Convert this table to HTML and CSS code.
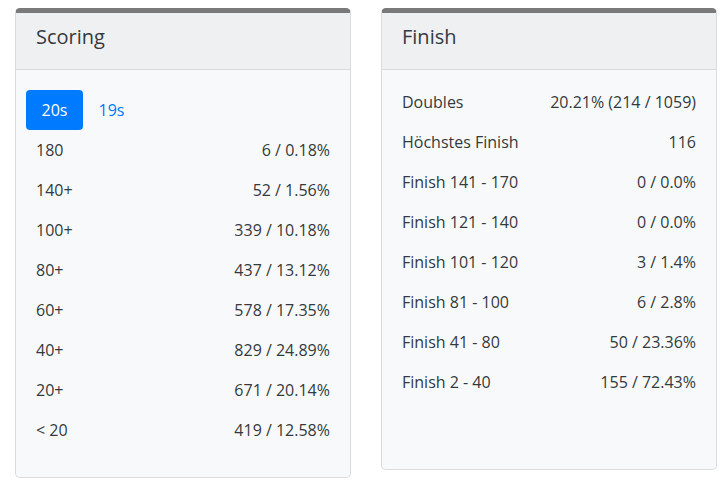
FILE: index.html
```html
<!DOCTYPE html>
<html>
<head>
<meta charset="utf-8">
<link rel="stylesheet" href="styles.css">
</head>
<body>
<div class="cards">
  <div class="card card-scoring">
    <div class="card-header">Scoring</div>
    <div class="card-body body-scoring">
      <div class="pills">
        <span class="pill active">20s</span>
        <span class="pill">19s</span>
      </div>
      <div class="rows">
        <div class="row"><span>180</span><span>6 / 0.18%</span></div>
        <div class="row"><span>140+</span><span>52 / 1.56%</span></div>
        <div class="row"><span>100+</span><span>339 / 10.18%</span></div>
        <div class="row"><span>80+</span><span>437 / 13.12%</span></div>
        <div class="row"><span>60+</span><span>578 / 17.35%</span></div>
        <div class="row"><span>40+</span><span>829 / 24.89%</span></div>
        <div class="row"><span>20+</span><span>671 / 20.14%</span></div>
        <div class="row"><span>&lt; 20</span><span>419 / 12.58%</span></div>
      </div>
    </div>
  </div>
  <div class="card card-finish">
    <div class="card-header">Finish</div>
    <div class="card-body body-finish">
      <div class="rows">
        <div class="row"><span>Doubles</span><span>20.21% (214 / 1059)</span></div>
        <div class="row"><span>Höchstes Finish</span><span>116</span></div>
        <div class="row"><span>Finish 141 - 170</span><span>0 / 0.0%</span></div>
        <div class="row"><span>Finish 121 - 140</span><span>0 / 0.0%</span></div>
        <div class="row"><span>Finish 101 - 120</span><span>3 / 1.4%</span></div>
        <div class="row"><span>Finish 81 - 100</span><span>6 / 2.8%</span></div>
        <div class="row"><span>Finish 41 - 80</span><span>50 / 23.36%</span></div>
        <div class="row"><span>Finish 2 - 40</span><span>155 / 72.43%</span></div>
      </div>
    </div>
  </div>
</div>
</body>
</html>
```
FILE: styles.css
```css
* { box-sizing: border-box; }
body {
  margin: 0;
  background: #fff;
  font-family: "Open Sans", "Noto Sans", sans-serif;
  color: #343a40;
  font-size: 16px;
}
.cards {
  display: flex;
  align-items: flex-start;
  gap: 30px;
  padding: 8px 0 0 15px;
}
.card {
  width: 336px;
  background: #f8f9fa;
  border: 1px solid #dadcde;
  border-top: 5px solid #7a7a7a;
  border-radius: 5px;
  overflow: hidden;
}
.card-header {
  height: 57px;
  background: #eff0f2;
  border-bottom: 1px solid #d9dadc;
  padding: 9px 20px 0;
  font-size: 20px;
  line-height: 30px;
  color: #343a40;
}
.body-scoring { padding: 20px 10px 27px; }
.body-finish { padding: 12px 10px 67px; }
.pills { display: flex; height: 40px; }
.pill {
  width: 57px;
  height: 40px;
  line-height: 40px;
  text-align: center;
  border-radius: 4px;
  color: #007bff;
  font-size: 16px;
}
.pill.active { background: #007bff; color: #fff; }
.rows { display: flex; flex-direction: column; }
.row {
  height: 40px;
  display: flex;
  justify-content: space-between;
  align-items: center;
  padding: 0 10px;
}
```
